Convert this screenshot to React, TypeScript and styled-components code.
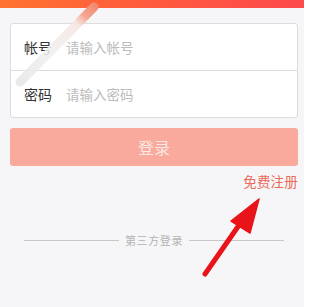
import React from "react";
import styled, { createGlobalStyle } from "styled-components";

const Global = createGlobalStyle`
  html, body { margin: 0; padding: 0; }
  body {
    background: #ffffff;
    font-family: "Noto Sans CJK SC", "Noto Sans", sans-serif;
    width: 309px;
    height: 307px;
    overflow: hidden;
  }
`;

const Frame = styled.div`
  display: flex;
  width: 309px;
  height: 307px;
  position: relative;
`;

const Screen = styled.div`
  width: 304px;
  height: 307px;
  background: #f6f6f8;
  display: flex;
  flex-direction: column;
`;

const Edge = styled.div`
  width: 5px;
  background: #ffffff;
`;

const TopBar = styled.div`
  height: 8px;
  background: linear-gradient(90deg, #ff7330 0%, #ff5a3e 50%, #fd4a4c 100%);
`;

const Content = styled.div`
  padding: 15px 6px 0 10px;
  display: flex;
  flex-direction: column;
`;

const Card = styled.div`
  background: #ffffff;
  border: 1px solid #dcdcdc;
  border-radius: 3px;
  display: flex;
  flex-direction: column;
`;

const Row = styled.div<{ $divider?: boolean }>`
  height: 46px;
  display: flex;
  align-items: center;
  padding-left: 13px;
  border-top: ${(p) => (p.$divider ? "1px solid #dcdcdc" : "none")};
`;

const Label = styled.span`
  width: 42px;
  font-size: 14px;
  color: #333333;
`;

const Placeholder = styled.span`
  font-size: 13.5px;
  color: #bcbcbc;
`;

const LoginButton = styled.div`
  margin-top: 10px;
  height: 38px;
  border-radius: 3px;
  background: #f9aa9c;
  display: flex;
  align-items: center;
  justify-content: center;
  color: #fbe7e3;
  font-size: 16px;
`;

const RegisterRow = styled.div`
  margin-top: 5px;
  height: 20px;
  display: flex;
  justify-content: flex-end;
  align-items: center;
`;

const RegisterLink = styled.span`
  font-size: 13.5px;
  color: #ec6a58;
  letter-spacing: 0.2px;
`;

const ThirdParty = styled.div`
  margin-top: 41px;
  padding: 0 14px 0 14px;
  display: flex;
  align-items: center;
  gap: 6px;
`;

const Line = styled.div`
  flex: 1;
  height: 1px;
  background: #c8c8c8;
`;

const ThirdText = styled.span`
  font-size: 11px;
  color: #b4b4b4;
  letter-spacing: 0.6px;
`;

const Overlay = styled.svg`
  position: absolute;
  left: 0;
  top: 0;
  pointer-events: none;
`;

export default function App() {
  return (
    <>
      <Global />
      <Frame>
        <Screen>
          <TopBar />
          <Content>
            <Card>
              <Row>
                <Label>帐号</Label>
                <Placeholder>请输入帐号</Placeholder>
              </Row>
              <Row $divider>
                <Label>密码</Label>
                <Placeholder>请输入密码</Placeholder>
              </Row>
            </Card>
            <LoginButton>登录</LoginButton>
            <RegisterRow>
              <RegisterLink>免费注册</RegisterLink>
            </RegisterRow>
            <ThirdParty>
              <Line />
              <ThirdText>第三方登录</ThirdText>
              <Line />
            </ThirdParty>
          </Content>
        </Screen>
        <Edge />
        <Overlay width="309" height="307" viewBox="0 0 309 307">
          <defs>
            <linearGradient id="streak" x1="95" y1="5" x2="19" y2="83" gradientUnits="userSpaceOnUse">
              <stop offset="0" stopColor="#f08b72" />
              <stop offset="0.14" stopColor="#f4a792" />
              <stop offset="0.24" stopColor="#f5e6e1" stopOpacity="0.9" />
              <stop offset="0.6" stopColor="#efefef" stopOpacity="0.85" />
              <stop offset="1" stopColor="#e6e6e6" stopOpacity="0.85" />
            </linearGradient>
          </defs>
          <line x1="94" y1="7" x2="20" y2="82" stroke="url(#streak)" strokeWidth="9" strokeLinecap="round" />
          <line x1="205" y1="274" x2="244" y2="218" stroke="#e8141a" strokeWidth="5" strokeLinecap="round" />
          <polygon points="259,199 231,221 250,233" fill="#e8141a" stroke="#e8141a" strokeWidth="1.5" strokeLinejoin="round" />
        </Overlay>
      </Frame>
    </>
  );
}
